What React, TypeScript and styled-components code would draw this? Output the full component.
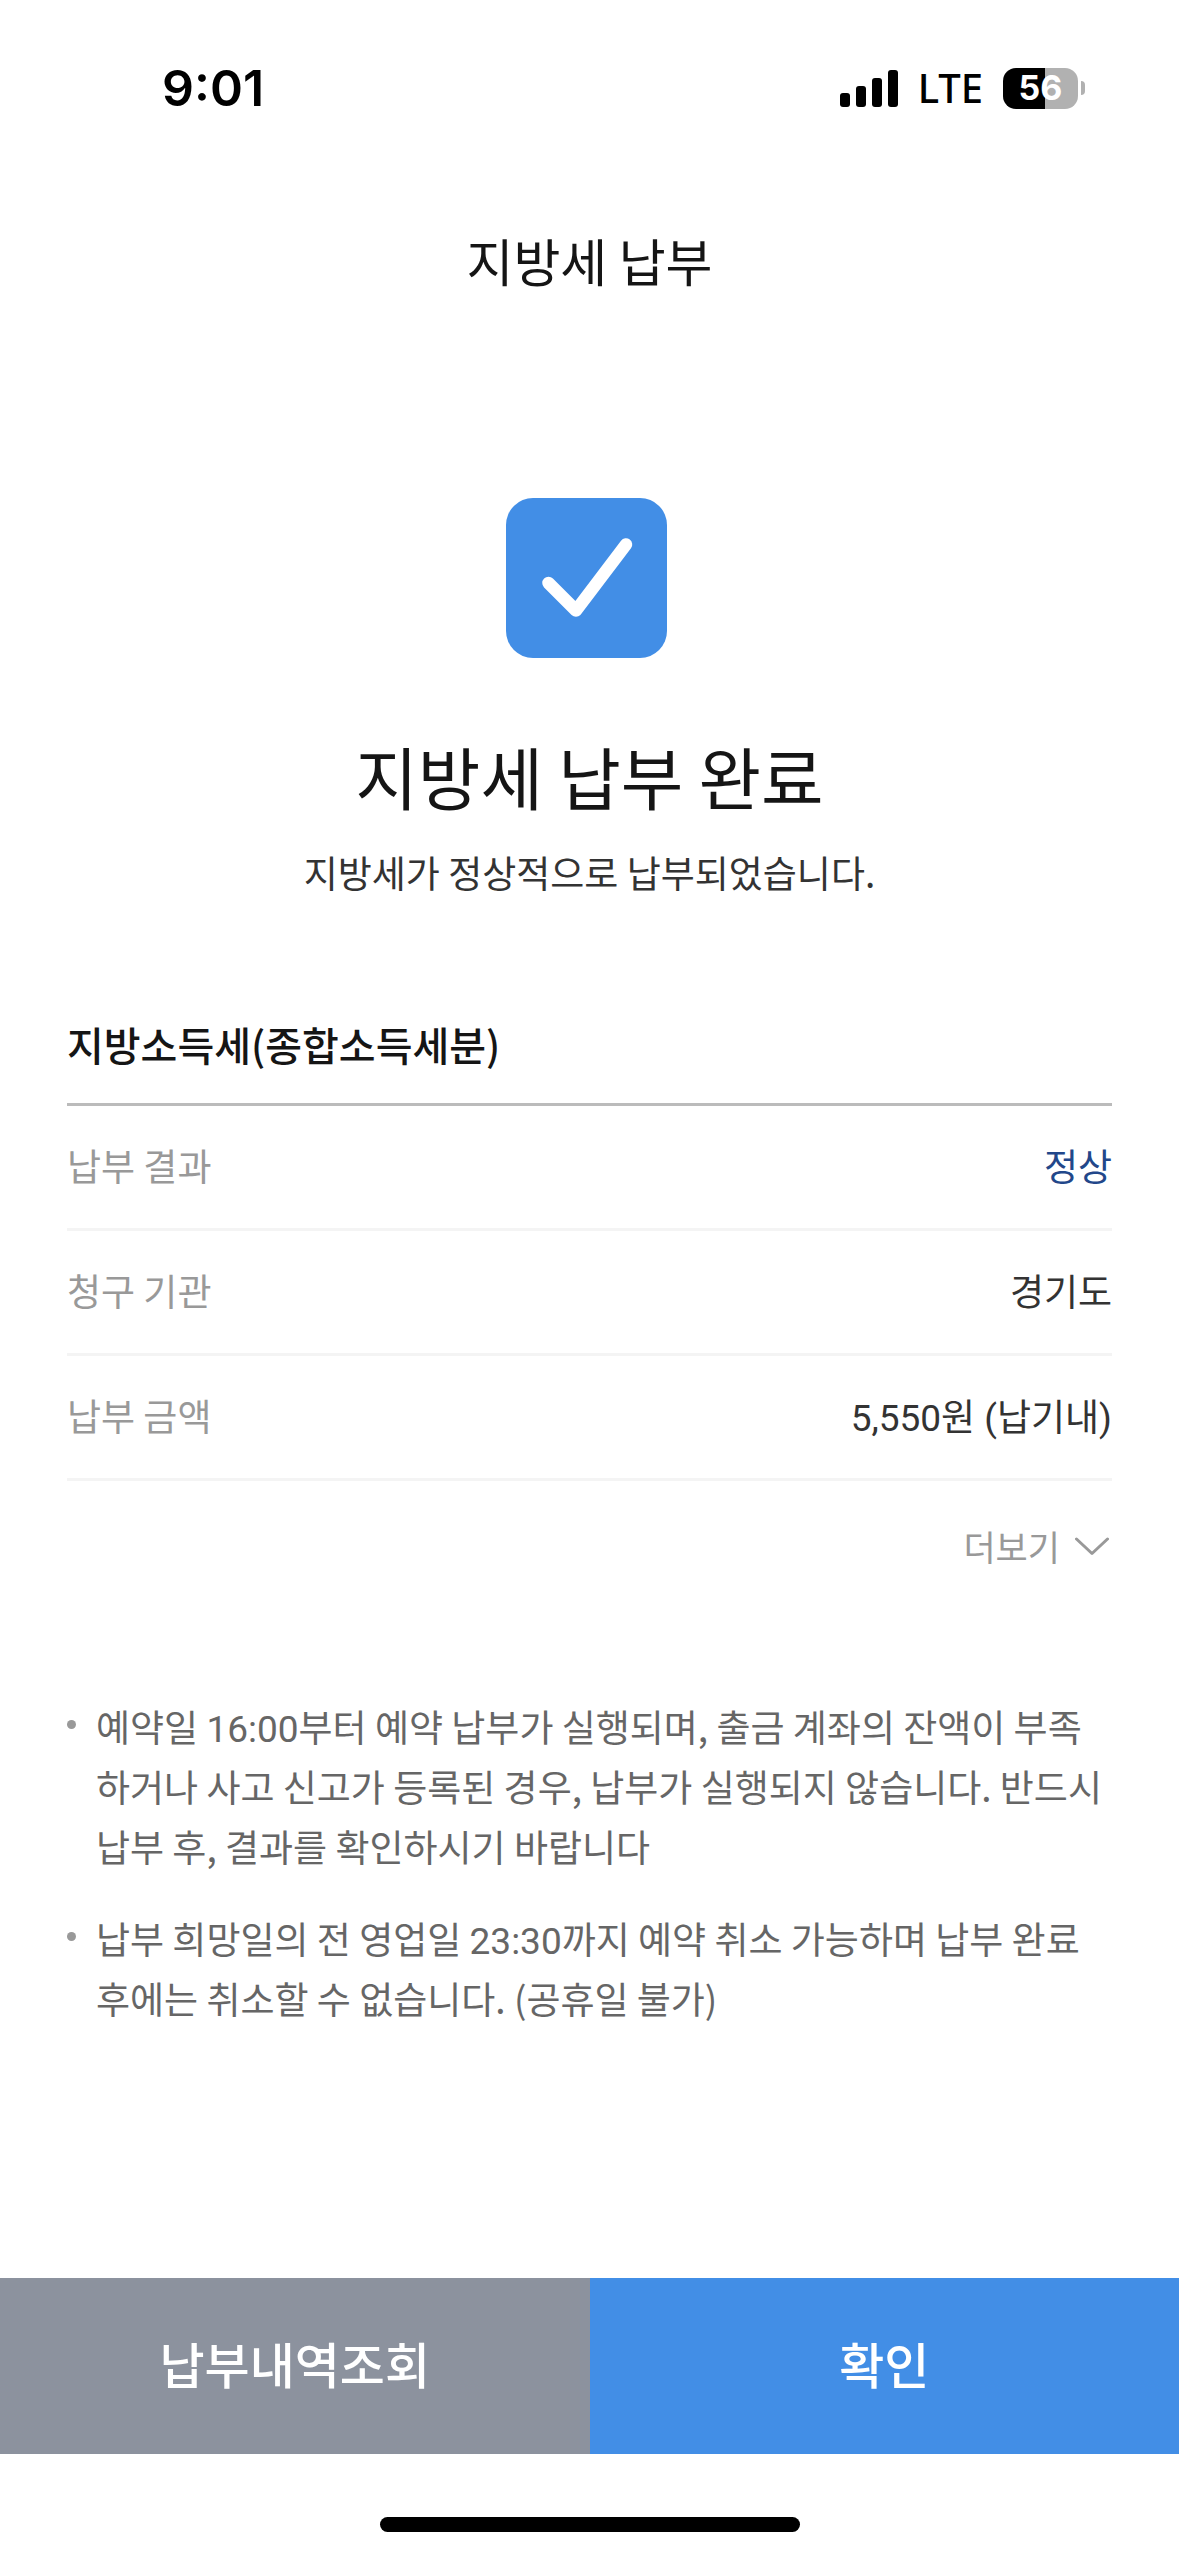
import React from 'react';
import styled, { createGlobalStyle } from 'styled-components';

const Global = createGlobalStyle`
  * { box-sizing: border-box; }
  html, body, #root { height: 100%; }
  body { margin: 0; background: #fff; color: #151515; font-family: "Noto Sans CJK KR", sans-serif; }
  button { font-family: inherit; border: 0; cursor: pointer; }
`;
const Screen = styled.div`
  display: flex;
  flex-direction: column;
  min-height: 100vh;
  background: #fff;
`;
const StatusBar = styled.div`
  display: flex;
  justify-content: space-between;
  align-items: center;
  height: 176px;
  padding: 0 94px 0 162px;
  color: #000;
  font-family: Inter, sans-serif;
`;
const Clock = styled.time`
  font-size: 50px;
  font-weight: 600;
  line-height: 60px;
`;
const StatusIcons = styled.div`
  display: flex;
  align-items: center;
  gap: 20px;
`;
const Network = styled.span`
  font-family: "Noto Sans", sans-serif;
  font-size: 40px;
  line-height: 48px;
  font-weight: 500;
`;
const Battery = styled.span`
  display: flex;
  align-items: center;
  gap: 3px;
`;
const BatteryBody = styled.span`
  display: flex;
  align-items: center;
  justify-content: center;
  width: 75px;
  height: 41px;
  border-radius: 13px;
  background: linear-gradient(90deg, #000 56%, #b1b1b1 56%);
  color: #fff;
  font-size: 34px;
  font-weight: 700;
  line-height: 40px;
`;
const BatteryTip = styled.span`
  width: 4px;
  height: 14px;
  border-radius: 0 4px 4px 0;
  background: #b1b1b1;
`;
const Header = styled.header`
  display: flex;
  align-items: center;
  justify-content: center;
  height: 168px;
`;
const HeaderTitle = styled.h1`
  margin: 0;
  font-size: 51px;
  line-height: 76px;
  font-weight: 400;
`;
const Main = styled.main`
  flex: 1;
  display: flex;
  flex-direction: column;
  padding: 154px 67px 0;
`;
const Hero = styled.section`
  display: flex;
  flex-direction: column;
  align-items: center;
`;
const CheckBadge = styled.svg`
  width: 167px;
  height: 160px;
`;
const HeroTitle = styled.h2`
  margin: 68px 0 0;
  font-size: 68px;
  line-height: 100px;
  font-weight: 400;
`;
const HeroText = styled.p`
  margin: 18px 0 0;
  font-size: 37px;
  line-height: 56px;
  color: #333;
`;
const Details = styled.section`
  margin-top: 114px;
`;
const DetailsTitle = styled.h3`
  margin: 0;
  padding-bottom: 29px;
  border-bottom: 3px solid #bbb;
  font-size: 40px;
  line-height: 60px;
  font-weight: 500;
`;
const DetailList = styled.dl`
  margin: 0;
`;
const DetailRow = styled.div`
  display: flex;
  justify-content: space-between;
  align-items: center;
  height: 125px;
  padding-bottom: 4px;
  border-bottom: 3px solid #f4f4f4;
  font-size: 37px;
  line-height: 56px;
`;
const Label = styled.dt`
  color: #999;
`;
const Value = styled.dd<{ $accent?: boolean }>`
  margin: 0;
  color: ${p => (p.$accent ? '#22478a' : '#333')};
`;
const Numeric = styled.span`
  font-family: Roboto, "Noto Sans CJK KR", sans-serif;
  line-height: 1;
`;
const More = styled.button`
  display: flex;
  align-items: center;
  gap: 15px;
  margin-left: auto;
  margin-top: 38px;
  padding: 0 3px 0 0;
  background: none;
  color: #999;
  font-size: 35px;
  line-height: 54px;
`;
const Notes = styled.ul`
  margin: 123px 0 0;
  padding: 0;
  list-style: none;
  display: flex;
  flex-direction: column;
  gap: 32px;
`;
const Note = styled.li`
  display: flex;
  gap: 20px;
  color: #666;
  font-size: 37px;
  line-height: 60px;
  word-break: break-all;

  &::before {
    content: '';
    flex: none;
    width: 9px;
    height: 9px;
    margin-top: 24px;
    border-radius: 50%;
    background: #999;
  }
`;
const Actions = styled.div`
  display: flex;
  height: 176px;
`;
const Action = styled.button<{ $primary?: boolean }>`
  flex: 1;
  padding: 0 0 6px;
  color: #fff;
  background: ${p => (p.$primary ? '#428ee6' : '#8c929e')};
  font-size: 49px;
  line-height: 72px;
  font-weight: 500;
`;
const HomeArea = styled.footer`
  display: flex;
  justify-content: center;
  align-items: flex-end;
  height: 102px;
  padding-bottom: 24px;
`;
const HomeBar = styled.span`
  width: 420px;
  height: 15px;
  border-radius: 8px;
  background: #000;
`;

const details = [
  { label: '납부 결과', value: '정상', accent: true },
  { label: '청구 기관', value: '경기도' },
  { label: '납부 금액', value: '5,550원 (납기내)', numeric: true },
];

export default function App() {
  return (
    <Screen>
      <Global />
      <StatusBar>
        <Clock>9:01</Clock>
        <StatusIcons>
          <svg width="58" height="37" viewBox="0 0 58 37" aria-hidden="true">
            <rect x="0" y="23" width="10" height="14" rx="3" />
            <rect x="16" y="16" width="10" height="21" rx="3" />
            <rect x="32" y="8" width="10" height="29" rx="3" />
            <rect x="48" y="0" width="10" height="37" rx="3" />
          </svg>
          <Network>LTE</Network>
          <Battery>
            <BatteryBody>56</BatteryBody>
            <BatteryTip />
          </Battery>
        </StatusIcons>
      </StatusBar>
      <Header>
        <HeaderTitle>지방세 납부</HeaderTitle>
      </Header>
      <Main>
        <Hero>
          <CheckBadge viewBox="0 0 167 160" aria-hidden="true">
            <rect width="161" height="160" rx="27" fill="#428ee6" />
            <path d="M42.500 85 L70 112.500 L120 46.500" fill="none" stroke="#fff" strokeWidth="12.500" strokeLinecap="round" strokeLinejoin="round" />
          </CheckBadge>
          <HeroTitle>지방세 납부 완료</HeroTitle>
          <HeroText>지방세가 정상적으로 납부되었습니다.</HeroText>
        </Hero>
        <Details>
          <DetailsTitle>지방소득세(종합소득세분)</DetailsTitle>
          <DetailList>
            {details.map(d => (
              <DetailRow key={d.label}>
                <Label>{d.label}</Label>
                <Value $accent={d.accent}>{d.numeric ? <Numeric>{d.value}</Numeric> : d.value}</Value>
              </DetailRow>
            ))}
          </DetailList>
          <More type="button">
            더보기
            <svg width="34" height="19" viewBox="0 0 34 19" aria-hidden="true">
              <path d="M1.500 2 L17 16.500 L32.500 2" fill="none" stroke="#999" strokeWidth="3" strokeLinecap="round" strokeLinejoin="round" />
            </svg>
          </More>
        </Details>
        <Notes>
          <Note>
            <span>
              예약일 <Numeric>16:00</Numeric>부터 예약 납부가 실행되며, 출금 계좌의 잔액이 부족하거나 사고 신고가 등록된 경우, 납부가 실행되지 않습니다. 반드시 납부 후, 결과를 확인하시기 바랍니다
            </span>
          </Note>
          <Note>
            <span>
              납부 희망일의 전 영업일 <Numeric>23:30</Numeric>까지 예약 취소 가능하며 납부 완료 후에는 취소할 수 없습니다. (공휴일 불가)
            </span>
          </Note>
        </Notes>
      </Main>
      <Actions>
        <Action type="button">납부내역조회</Action>
        <Action type="button" $primary>확인</Action>
      </Actions>
      <HomeArea>
        <HomeBar />
      </HomeArea>
    </Screen>
  );
}
